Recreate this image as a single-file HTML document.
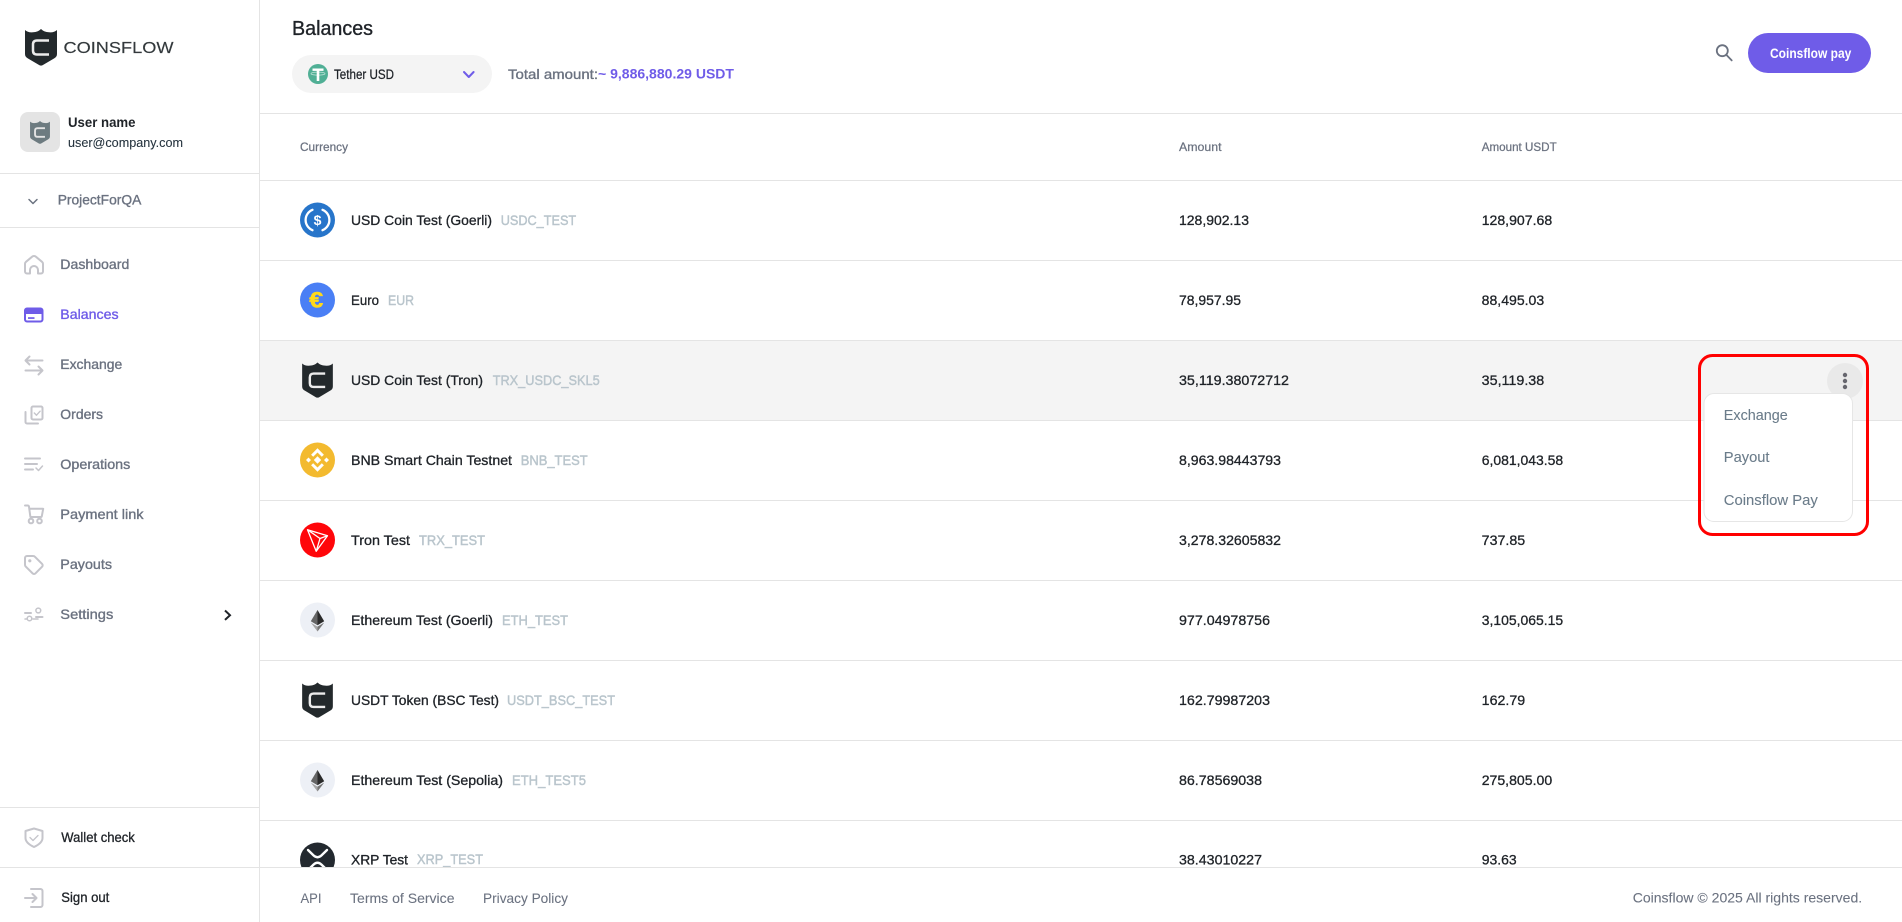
<!DOCTYPE html>
<html lang="en">
<head>
<meta charset="utf-8">
<title>Coinsflow - Balances</title>
<style>
html,body{margin:0;padding:0;width:1902px;height:922px;overflow:hidden;background:#fff}
svg{display:block}
text{font-family:"Liberation Sans",sans-serif;white-space:pre}
.n{font-size:14px;fill:#1f2328;stroke:#1f2328;stroke-width:.32px}
.t{font-size:14px;fill:#b9c5cc;stroke:#b9c5cc;stroke-width:.45px}
.a{font-size:14px;fill:#1f2328;stroke:#1f2328;stroke-width:.3px}
.h{font-size:12px;fill:#6b7280;stroke:#6b7280;stroke-width:.25px}
.m{font-size:14px;fill:#6b7280;stroke:#6b7280;stroke-width:.35px}
.f{font-size:14px;fill:#6b7280;stroke:#6b7280;stroke-width:.08px}
.d{font-size:15px;fill:#6b7c8a;stroke:#6b7c8a;stroke-width:.1px}
.i{fill:none;stroke:#c5c5cb;stroke-width:2;stroke-linecap:round;stroke-linejoin:round}
</style>
</head>
<body>
<svg width="1902" height="922" viewBox="0 0 1902 922" xmlns="http://www.w3.org/2000/svg">
<rect width="1902" height="922" fill="#fff"/>

<!-- hovered row -->
<rect x="260" y="341" width="1642" height="79" fill="#f4f4f4"/>

<!-- table lines -->
<g fill="#e4e4e4">
<rect x="260" y="113" width="1642" height="1"/>
<rect x="260" y="180" width="1642" height="1"/>
<rect x="260" y="260" width="1642" height="1"/>
<rect x="260" y="340" width="1642" height="1"/>
<rect x="260" y="420" width="1642" height="1"/>
<rect x="260" y="500" width="1642" height="1"/>
<rect x="260" y="580" width="1642" height="1"/>
<rect x="260" y="660" width="1642" height="1"/>
<rect x="260" y="740" width="1642" height="1"/>
<rect x="260" y="820" width="1642" height="1"/>
</g>

<!-- header -->
<text x="292" y="35" font-size="20" fill="#1f2328" stroke="#1f2328" stroke-width=".35" textLength="81" lengthAdjust="spacingAndGlyphs">Balances</text>
<rect x="292" y="55" width="200" height="38" rx="19" fill="#f4f4f4"/>
<circle cx="318" cy="74" r="10" fill="#50af95"/>
<path d="M312.5 68.5h11v2.400h-4.200v10.100h-2.600V70.900h-4.200z" fill="#fff"/>
<ellipse cx="318" cy="73.600" rx="7" ry="1.500" fill="none" stroke="#fff" stroke-width=".8" opacity=".6"/>
<text x="334" y="79" font-size="13.5" fill="#1f2328" stroke="#1f2328" stroke-width=".25" textLength="60" lengthAdjust="spacingAndGlyphs">Tether USD</text>
<path d="M464 72l4.800 5 4.800-5" fill="none" stroke="#6f5ce8" stroke-width="2" stroke-linecap="round" stroke-linejoin="round"/>
<text x="508" y="79" class="m" textLength="90" lengthAdjust="spacingAndGlyphs">Total amount:</text>
<text x="598" y="78.500" font-size="14" font-weight="700" fill="#6f5ce8" textLength="136" lengthAdjust="spacingAndGlyphs">~ 9,886,880.29 USDT</text>

<circle cx="1722.3" cy="50.700" r="5.500" fill="none" stroke="#6b7280" stroke-width="1.800"/>
<path d="M1726.500 55l5.200 5.400" fill="none" stroke="#6b7280" stroke-width="1.800" stroke-linecap="round"/>
<rect x="1748" y="33" width="123" height="40" rx="20" fill="#6f5ce8"/>
<text x="1770" y="58" font-size="14" font-weight="700" fill="#fff" textLength="81.3" lengthAdjust="spacingAndGlyphs">Coinsflow pay</text>

<!-- column heads -->
<text x="300" y="151" class="h" textLength="48" lengthAdjust="spacingAndGlyphs">Currency</text>
<text x="1179" y="151" class="h" textLength="42.5" lengthAdjust="spacingAndGlyphs">Amount</text>
<text x="1481.7" y="151" class="h" textLength="75" lengthAdjust="spacingAndGlyphs">Amount USDT</text>

<!-- row 1 USDC -->
<circle cx="317.5" cy="220" r="17.5" fill="#2775ca"/>
<path d="M312.500 209.800a11 11 0 0 0 0 20.400M322.500 209.800a11 11 0 0 1 0 20.400" fill="none" stroke="#fff" stroke-width="2.300" stroke-linecap="round"/>
<text x="317.5" y="225" font-size="14" font-weight="700" fill="#fff" text-anchor="middle">$</text>
<text x="351" y="225" class="n" textLength="141" lengthAdjust="spacingAndGlyphs">USD Coin Test (Goerli)</text>
<text x="500.7" y="225" class="t" textLength="75.5" lengthAdjust="spacingAndGlyphs">USDC_TEST</text>
<text x="1179" y="225" class="a" textLength="70" lengthAdjust="spacingAndGlyphs">128,902.13</text>
<text x="1481.7" y="225" class="a" textLength="70.5" lengthAdjust="spacingAndGlyphs">128,907.68</text>

<!-- row 2 EUR -->
<circle cx="317.5" cy="300" r="17.5" fill="#4a7ff5"/>
<text x="309.3" y="307.700" font-size="22" font-weight="700" fill="#ffd91a" stroke="#ffd91a" stroke-width=".5" textLength="14" lengthAdjust="spacingAndGlyphs">€</text>
<text x="351" y="305" class="n" textLength="28" lengthAdjust="spacingAndGlyphs">Euro</text>
<text x="388" y="305" class="t" textLength="26" lengthAdjust="spacingAndGlyphs">EUR</text>
<text x="1179" y="305" class="a" textLength="62" lengthAdjust="spacingAndGlyphs">78,957.95</text>
<text x="1481.7" y="305" class="a" textLength="62.5" lengthAdjust="spacingAndGlyphs">88,495.03</text>

<!-- row 3 shield -->
<svg x="302" y="362.5" width="31" height="35.5" viewBox="0 0 32 37">
<path d="M0 1Q3 3.800 8 3.300Q13 3 16 0Q19 3 24 3.300Q29 3.800 32 1V25Q32 28 29 29.500L17.500 36.300Q16 37 14.500 36.300L3 29.500Q0 28 0 25Z" fill="#23292c"/>
<path d="M24 11.500H12Q8 11.500 8 15.500V21.500Q8 25.500 12 25.500H24" fill="none" stroke="#ececec" stroke-width="2.500"/>
</svg>
<text x="351" y="385" class="n" textLength="132" lengthAdjust="spacingAndGlyphs">USD Coin Test (Tron)</text>
<text x="492.7" y="385" class="t" textLength="107" lengthAdjust="spacingAndGlyphs">TRX_USDC_SKL5</text>
<text x="1179" y="385" class="a" textLength="110" lengthAdjust="spacingAndGlyphs">35,119.38072712</text>
<text x="1481.7" y="385" class="a" textLength="62.5" lengthAdjust="spacingAndGlyphs">35,119.38</text>

<!-- row 4 BNB -->
<circle cx="317.5" cy="460" r="17.5" fill="#f3ba2f"/>
<g transform="translate(317.5 460)">
<path d="M0-3.700L3.700 0L0 3.700L-3.700 0Z" fill="#fff"/>
<path d="M-9-2.500L-6.500 0L-9 2.500L-11.500 0ZM9-2.500L11.500 0L9 2.500L6.500 0Z" fill="#fff"/>
<path d="M-6.400-5.300L0-11.700L6.400-5.300L4.300-3.200L0-7.500L-4.300-3.200ZM-6.400 5.300L0 11.700L6.400 5.300L4.300 3.200L0 7.500L-4.300 3.200Z" fill="#fff"/>
</g>
<text x="351" y="465" class="n" textLength="161" lengthAdjust="spacingAndGlyphs">BNB Smart Chain Testnet</text>
<text x="520.7" y="465" class="t" textLength="67" lengthAdjust="spacingAndGlyphs">BNB_TEST</text>
<text x="1179" y="465" class="a" textLength="102" lengthAdjust="spacingAndGlyphs">8,963.98443793</text>
<text x="1481.7" y="465" class="a" textLength="81.5" lengthAdjust="spacingAndGlyphs">6,081,043.58</text>

<!-- row 5 TRON -->
<circle cx="317.5" cy="540" r="17.5" fill="#ff060a"/>
<g transform="translate(317.5 540)" fill="none" stroke="#fff" stroke-width="1.300" stroke-linejoin="round">
<path d="M-10-10.300L10-4.300L-1.300 11.300Z"/>
<path d="M-10-10.300L2.500-1.500L10-4.300M2.500-1.500L-1.300 11.300"/>
</g>
<text x="351" y="545" class="n" textLength="59" lengthAdjust="spacingAndGlyphs">Tron Test</text>
<text x="419" y="545" class="t" textLength="66" lengthAdjust="spacingAndGlyphs">TRX_TEST</text>
<text x="1179" y="545" class="a" textLength="102" lengthAdjust="spacingAndGlyphs">3,278.32605832</text>
<text x="1481.7" y="545" class="a" textLength="43.5" lengthAdjust="spacingAndGlyphs">737.85</text>

<!-- row 6 ETH -->
<circle cx="317.5" cy="620" r="17.5" fill="#edf0f6"/>
<g transform="translate(317.5 620)">
<path d="M0-10L-6.700 1.200L0 5.200Z" fill="#666"/>
<path d="M0-10L6.700 1.200L0 5.200Z" fill="#2a2a2a"/>
<path d="M-6.700 2.600L0 6.600V11.500Z" fill="#a8a8a8"/>
<path d="M6.700 2.600L0 6.600V11.500Z" fill="#777"/>
</g>
<text x="351" y="625" class="n" textLength="142" lengthAdjust="spacingAndGlyphs">Ethereum Test (Goerli)</text>
<text x="502" y="625" class="t" textLength="66" lengthAdjust="spacingAndGlyphs">ETH_TEST</text>
<text x="1179" y="625" class="a" textLength="91" lengthAdjust="spacingAndGlyphs">977.04978756</text>
<text x="1481.7" y="625" class="a" textLength="81.5" lengthAdjust="spacingAndGlyphs">3,105,065.15</text>

<!-- row 7 shield -->
<svg x="302" y="682.5" width="31" height="35.5" viewBox="0 0 32 37">
<path d="M0 1Q3 3.800 8 3.300Q13 3 16 0Q19 3 24 3.300Q29 3.800 32 1V25Q32 28 29 29.500L17.500 36.300Q16 37 14.500 36.300L3 29.500Q0 28 0 25Z" fill="#23292c"/>
<path d="M24 11.500H12Q8 11.500 8 15.500V21.500Q8 25.500 12 25.500H24" fill="none" stroke="#ececec" stroke-width="2.500"/>
</svg>
<text x="351" y="705" class="n" textLength="148" lengthAdjust="spacingAndGlyphs">USDT Token (BSC Test)</text>
<text x="507" y="705" class="t" textLength="108" lengthAdjust="spacingAndGlyphs">USDT_BSC_TEST</text>
<text x="1179" y="705" class="a" textLength="91" lengthAdjust="spacingAndGlyphs">162.79987203</text>
<text x="1481.7" y="705" class="a" textLength="43.5" lengthAdjust="spacingAndGlyphs">162.79</text>

<!-- row 8 ETH -->
<circle cx="317.5" cy="780" r="17.5" fill="#edf0f6"/>
<g transform="translate(317.5 780)">
<path d="M0-10L-6.700 1.200L0 5.200Z" fill="#666"/>
<path d="M0-10L6.700 1.200L0 5.200Z" fill="#2a2a2a"/>
<path d="M-6.700 2.600L0 6.600V11.500Z" fill="#a8a8a8"/>
<path d="M6.700 2.600L0 6.600V11.500Z" fill="#777"/>
</g>
<text x="351" y="785" class="n" textLength="152" lengthAdjust="spacingAndGlyphs">Ethereum Test (Sepolia)</text>
<text x="512" y="785" class="t" textLength="74" lengthAdjust="spacingAndGlyphs">ETH_TEST5</text>
<text x="1179" y="785" class="a" textLength="83" lengthAdjust="spacingAndGlyphs">86.78569038</text>
<text x="1481.7" y="785" class="a" textLength="70.5" lengthAdjust="spacingAndGlyphs">275,805.00</text>

<!-- row 9 XRP -->
<circle cx="317.5" cy="860" r="17.5" fill="#23292f"/>
<g transform="translate(317.5 860)" fill="none" stroke="#fff" stroke-width="2.400" stroke-linecap="round">
<path d="M-9.500-10L-4-4.600Q0-1 4-4.600L9.500-10"/>
<path d="M-9.500 10L-4 4.600Q0 1 4 4.600L9.500 10"/>
</g>
<text x="351" y="864.500" class="n" textLength="57" lengthAdjust="spacingAndGlyphs">XRP Test</text>
<text x="417" y="864.200" class="t" textLength="66" lengthAdjust="spacingAndGlyphs">XRP_TEST</text>
<text x="1179" y="864.500" class="a" textLength="83" lengthAdjust="spacingAndGlyphs">38.43010227</text>
<text x="1481.7" y="864.500" class="a" textLength="35" lengthAdjust="spacingAndGlyphs">93.63</text>

<!-- kebab + dropdown -->
<circle cx="1845" cy="381" r="18" fill="#e9e9e9"/>
<circle cx="1845" cy="375" r="2.200" fill="#66666e"/>
<circle cx="1845" cy="381" r="2.200" fill="#66666e"/>
<circle cx="1845" cy="387" r="2.200" fill="#66666e"/>
<rect x="1704" y="393.5" width="148.5" height="128" rx="10" fill="#fff" stroke="#e6e6e6"/>
<text x="1723.8" y="420" class="d" textLength="64" lengthAdjust="spacingAndGlyphs">Exchange</text>
<text x="1723.8" y="462" class="d" textLength="45.7" lengthAdjust="spacingAndGlyphs">Payout</text>
<text x="1723.8" y="505" class="d" textLength="94" lengthAdjust="spacingAndGlyphs">Coinsflow Pay</text>
<rect x="1699.5" y="355.5" width="168" height="179" rx="13" fill="none" stroke="#ff0000" stroke-width="3"/>

<!-- footer -->
<rect x="260" y="868" width="1642" height="54" fill="#fff"/>
<rect x="260" y="867" width="1642" height="1" fill="#e4e4e4"/>
<text x="300.5" y="903" class="f" textLength="21" lengthAdjust="spacingAndGlyphs">API</text>
<text x="350" y="903" class="f" textLength="104.5" lengthAdjust="spacingAndGlyphs">Terms of Service</text>
<text x="483" y="903" class="f" textLength="85" lengthAdjust="spacingAndGlyphs">Privacy Policy</text>
<text x="1632.7" y="902.5" class="f" textLength="229.5" lengthAdjust="spacingAndGlyphs">Coinsflow © 2025 All rights reserved.</text>

<!-- sidebar -->
<rect x="0" y="0" width="259" height="922" fill="#fff"/>
<rect x="259" y="0" width="1" height="922" fill="#e4e4e4"/>
<rect x="0" y="173" width="259" height="1" fill="#e4e4e4"/>
<rect x="0" y="227" width="259" height="1" fill="#e4e4e4"/>
<rect x="0" y="807" width="259" height="1" fill="#e4e4e4"/>
<rect x="0" y="867" width="259" height="1" fill="#e4e4e4"/>

<svg x="25" y="29" width="32" height="37" viewBox="0 0 32 37">
<path d="M0 1Q3 3.800 8 3.300Q13 3 16 0Q19 3 24 3.300Q29 3.800 32 1V25Q32 28 29 29.500L17.500 36.300Q16 37 14.500 36.300L3 29.500Q0 28 0 25Z" fill="#23292c"/>
<path d="M24 11.500H12Q8 11.500 8 15.500V21.500Q8 25.500 12 25.500H24" fill="none" stroke="#ececec" stroke-width="2.500"/>
</svg>
<text x="63.5" y="53" font-size="15.5" fill="#33393c" stroke="#33393c" stroke-width=".15" textLength="110" lengthAdjust="spacingAndGlyphs">COINSFLOW</text>

<rect x="20" y="112" width="40" height="40" rx="8" fill="#e4e4e4"/>
<svg x="30" y="121" width="20" height="23" viewBox="0 0 32 37">
<path d="M0 1Q3 3.800 8 3.300Q13 3 16 0Q19 3 24 3.300Q29 3.800 32 1V25Q32 28 29 29.500L17.500 36.300Q16 37 14.500 36.300L3 29.500Q0 28 0 25Z" fill="#6d7b80"/>
<path d="M24 11.500H12Q8 11.500 8 15.500V21.500Q8 25.500 12 25.500H24" fill="none" stroke="#e4e4e4" stroke-width="3"/>
</svg>
<text x="68" y="127" font-size="14" font-weight="700" fill="#1f2328" textLength="67.5" lengthAdjust="spacingAndGlyphs">User name</text>
<text x="68" y="147" font-size="13" fill="#26343f" stroke="#26343f" stroke-width=".1" textLength="115" lengthAdjust="spacingAndGlyphs">user@company.com</text>

<path d="M29 199.500l4 4 4-4" fill="none" stroke="#6b7280" stroke-width="1.500" stroke-linecap="round" stroke-linejoin="round"/>
<text x="57.7" y="204.7" class="m" textLength="83.6" lengthAdjust="spacingAndGlyphs">ProjectForQA</text>

<!-- nav icons -->
<path class="i" d="M30 273.500h-3a2 2 0 0 1-2-2v-7.500a3 3 0 0 1 1-2.200l6-5a3 3 0 0 1 4 0l6 5a3 3 0 0 1 1 2.200v7.500a2 2 0 0 1-2 2h-3v-3.500a4 4 0 0 0-8 0z"/>
<rect x="25" y="308.5" width="17.5" height="13" rx="2" fill="none" stroke="#6f5ce8" stroke-width="2"/>
<rect x="25" y="309" width="17.5" height="5" fill="#6f5ce8"/>
<rect x="28" y="317.200" width="6.500" height="1.700" fill="#6f5ce8"/>
<path class="i" d="M42.500 360.500H25.500M29.500 356.500l-4 4 4 4M25.500 370.500h17M38.500 366.500l4 4-4 4"/>
<path class="i" d="M33 406.500h8a1.500 1.500 0 0 1 1.500 1.500v10a1.500 1.500 0 0 1-1.500 1.500H33a1.500 1.500 0 0 1-1.500-1.500v-10a1.500 1.500 0 0 1 1.500-1.500z"/>
<path d="M34.300 413l2.200 2.200 3.600-4" fill="none" stroke="#c5c5cb" stroke-width="1.400" stroke-linecap="round" stroke-linejoin="round"/>
<path class="i" d="M25.500 412v10a1.500 1.500 0 0 0 1.500 1.500h11"/>
<path class="i" d="M25 458.500h15M25 464h12M25 469.500h8"/>
<path d="M36 468l2.500 2.500 4-4.500" fill="none" stroke="#c5c5cb" stroke-width="1.500" stroke-linecap="round" stroke-linejoin="round"/>
<path class="i" d="M25 505.500h2.500a1.500 1.500 0 0 1 1.500 1.300l1.400 10.200h10.400a1 1 0 0 0 1-.8l1.400-7.400H29.400"/>
<circle class="i" cx="31" cy="521" r="2.300"/>
<circle class="i" cx="39.5" cy="521" r="2.300"/>
<path class="i" d="M25 558a2 2 0 0 1 2-2h6a3 3 0 0 1 2.100.9l7 7a2 2 0 0 1 0 2.800l-6.700 6.700a2 2 0 0 1-2.800 0l-7-7a3 3 0 0 1-.6-2z"/>
<circle cx="29.800" cy="560.800" r="1.600" fill="#c5c5cb"/>
<path class="i" d="M25 613h6M36 617h6.500" stroke-width="1.600"/>
<circle cx="29.500" cy="618.500" r="2.300" fill="none" stroke="#c5c5cb" stroke-width="1.500"/>
<circle cx="38.300" cy="610.500" r="2.400" fill="none" stroke="#c5c5cb" stroke-width="1.500"/>
<path d="M25 619h1.500M33 619h5" fill="none" stroke="#c5c5cb" stroke-width="1.500" stroke-linecap="round"/>

<text x="60.3" y="269" class="m" textLength="69" lengthAdjust="spacingAndGlyphs">Dashboard</text>
<text x="60.3" y="319" font-size="14" fill="#6f5ce8" stroke="#6f5ce8" stroke-width=".35" textLength="58.3" lengthAdjust="spacingAndGlyphs">Balances</text>
<text x="60.3" y="369" class="m" textLength="62" lengthAdjust="spacingAndGlyphs">Exchange</text>
<text x="60.3" y="419" class="m" textLength="42.7" lengthAdjust="spacingAndGlyphs">Orders</text>
<text x="60.3" y="469" class="m" textLength="70" lengthAdjust="spacingAndGlyphs">Operations</text>
<text x="60.3" y="519" class="m" textLength="83.3" lengthAdjust="spacingAndGlyphs">Payment link</text>
<text x="60.3" y="569" class="m" textLength="51.7" lengthAdjust="spacingAndGlyphs">Payouts</text>
<text x="60.3" y="619" class="m" textLength="53" lengthAdjust="spacingAndGlyphs">Settings</text>
<path d="M225 610.500l5 4.700-5 4.700" fill="none" stroke="#1f2328" stroke-width="2"/>

<path class="i" d="M25.500 831l8.500-2.500 8.500 2.500v7q0 5-8.500 9-8.500-4-8.500-9z" stroke-width="1.500"/>
<path d="M30 837.500l3 3 5-5" fill="none" stroke="#c5c5cb" stroke-width="1.300" stroke-linecap="round" stroke-linejoin="round"/>
<text x="61.3" y="842" class="n" textLength="73.5" lengthAdjust="spacingAndGlyphs">Wallet check</text>

<path class="i" d="M31 889h9.500a2 2 0 0 1 2 2v14a2 2 0 0 1-2 2H31M25 898h11.500M32.500 894l4 4-4 4"/>
<text x="61.3" y="902" class="n" textLength="48" lengthAdjust="spacingAndGlyphs">Sign out</text>
</svg>
</body>
</html>
